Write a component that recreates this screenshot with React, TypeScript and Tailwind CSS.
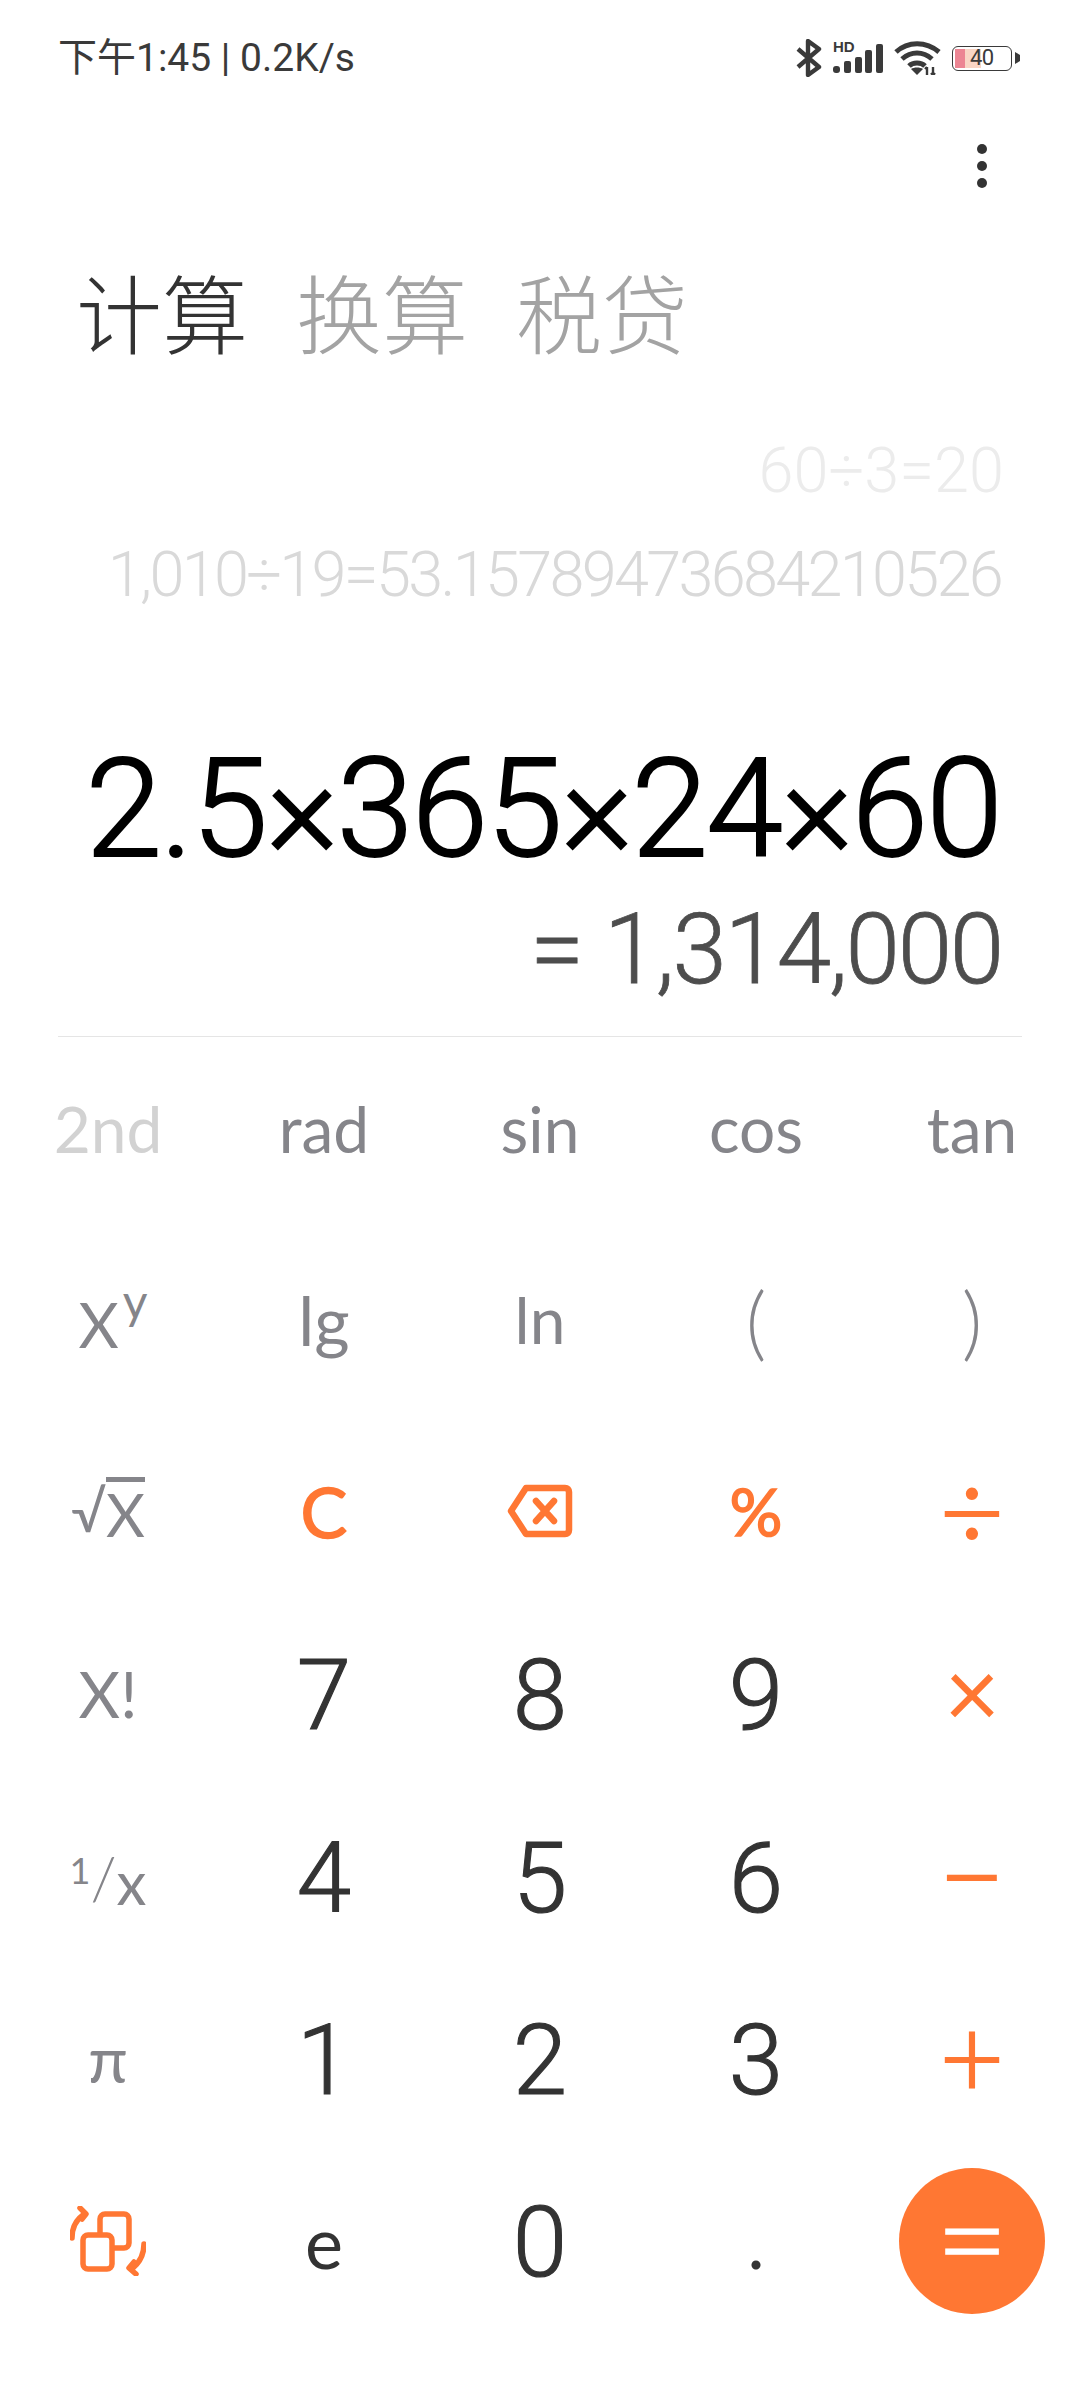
const sans = "font-['Lato','Noto_Sans_CJK_SC',sans-serif]";
const nums = "font-['Roboto','Noto_Sans_CJK_SC',sans-serif]";

const ORANGE = "#ff7733";

function BluetoothIcon() {
  return (
    <svg width="26" height="38" viewBox="0 0 26 38" fill="none" stroke="#3a3a3a" strokeWidth="4.4">
      <path d="M2 10 L23 28 L12 36 V2 L23 10 L2 28" strokeLinejoin="round" />
    </svg>
  );
}

function SignalIcon() {
  return (
    <div className="relative w-[50px] h-[32px]">
      <span className="absolute left-0 top-[-3px] text-[15px] leading-[16px] font-bold text-[#3a3a3a] font-['Liberation_Sans',sans-serif]">HD</span>
      <svg className="absolute left-0 top-0" width="50" height="32" viewBox="0 0 50 32" fill="#3a3a3a">
        <rect x="0" y="24" width="7" height="7" rx="3" />
        <rect x="11" y="19" width="7" height="12" rx="2" />
        <rect x="22" y="15" width="7" height="16" rx="2" />
        <rect x="32" y="8" width="7" height="23" rx="2" />
        <rect x="43" y="2" width="7" height="29" rx="2" />
      </svg>
    </div>
  );
}

function WifiIcon() {
  return (
    <svg width="47" height="34" viewBox="0 0 47 34" fill="none" stroke="#3a3a3a" strokeWidth="5">
      <path d="M2 11 C14 0 32 0 45 11" />
      <path d="M8 18 C17 10 29 10 38 18" />
      <path d="M15 25 C19 21 27 21 31 25" />
      <path d="M17 28 L23 34 L29 28 C26 26 20 26 17 28 Z" fill="#3a3a3a" stroke="none" />
      <path d="M33 34 V26 M31 28 L33 26 M39 34 V26 M37 32 L39 34 L41 32" strokeWidth="2.4" />
    </svg>
  );
}

function BatteryIcon() {
  return (
    <div className="flex items-center gap-[3px]">
      <div className="relative w-[60px] h-[25px] rounded-[6px] border-[1.5px] border-[#3a3a3a] flex items-center">
        <div className="absolute left-[2px] top-[2px] bottom-[2px] w-[10px] bg-[#ec8593]" />
        <div className="absolute left-[12px] top-[2px] bottom-[2px] w-[16px] bg-[#f9d5c5]" />
        <span className={`relative ml-[17px] text-[22px] leading-[22px] tracking-[-0.5px] text-[#3a3a3a] ${nums}`}>40</span>
      </div>
      <svg width="5" height="12" viewBox="0 0 5 12" fill="#3a3a3a">
        <path d="M0 0 L5 3 V9 L0 12 Z" />
      </svg>
    </div>
  );
}

function BackspaceIcon() {
  return (
    <svg width="66" height="54" viewBox="0 0 66 54" fill="none" stroke={ORANGE} strokeWidth="6.5" strokeLinejoin="round" strokeLinecap="round">
      <path d="M19 4 H58 C60.5 4 62 5.5 62 8 V46 C62 48.5 60.5 50 58 50 H19 L4 27 Z" />
      <path d="M29 17 L47 37 M47 17 L29 37" />
    </svg>
  );
}

function SwitchIcon() {
  return (
    <svg width="76" height="70" viewBox="0 0 76 70" fill="none" stroke={ORANGE} strokeWidth="5.5" strokeLinecap="round" strokeLinejoin="round">
      <rect x="30" y="8" width="29" height="34" rx="5" />
      <rect x="13" y="29" width="29" height="34" rx="5" fill="#ffffff" />
      <path d="M2 32 C2 22 6 14 13 9" />
      <path d="M10 2 L16 8 L12 13" />
      <path d="M74 38 C74 48 70 56 63 62" />
      <path d="M66 68 L59 62 L64 56" />
    </svg>
  );
}

const keyBase = "flex items-center justify-center leading-none";
const fnKey = `${keyBase} text-[64px] text-[#85858a]`;
const numKey = `${keyBase} text-[98px] pt-[4px] font-light [-webkit-text-stroke:1.2px_#333333] text-[#333333] ${nums}`;
const opKey = `${keyBase} text-[#ff7733]`;
const opLine = "font-light [-webkit-text-stroke:1.8px_#ff7733]";

export default function App() {
  return (
    <div className={`w-[1080px] h-[2400px] bg-white overflow-hidden ${sans}`}>
      {/* STATUS BAR */}
      <div className="h-[116px] pl-[58px] pr-[60px] flex items-center justify-between">
        <span className={`text-[39px] leading-none text-[#3a3a3a] whitespace-nowrap ${nums}`}>下午1:45 | 0.2K/s</span>
        <div className="flex items-center gap-[11px]">
          <BluetoothIcon />
          <SignalIcon />
          <WifiIcon />
          <BatteryIcon />
        </div>
      </div>

      {/* MENU */}
      <div className="h-[100px] pr-[93px] flex items-center justify-end">
        <div className="flex flex-col gap-[7px]">
          <span className="w-[10px] h-[10px] rounded-full bg-[#333333]" />
          <span className="w-[10px] h-[10px] rounded-full bg-[#333333]" />
          <span className="w-[10px] h-[10px] rounded-full bg-[#333333]" />
        </div>
      </div>

      {/* TABS */}
      <div className="h-[190px] pl-[76px] flex items-center gap-[48px] text-[86px] leading-none font-light font-['Noto_Sans_CJK_SC',sans-serif]">
        <span className="text-[#333333]">计算</span>
        <span className="text-[#a3a3a3]">换算</span>
        <span className="text-[#a3a3a3]">税贷</span>
      </div>

      {/* HISTORY */}
      <div className={`pt-[13px] pr-[76px] flex flex-col items-end font-light text-[63px] whitespace-nowrap ${nums}`}>
        <div className="h-[104px] flex items-center text-[#ececec]">60÷3=20</div>
        <div className="h-[104px] mr-[3px] flex items-center tracking-[-2.7px] text-[#d9d9d9]">1,010÷19=53.15789473684210526</div>
      </div>

      {/* EXPRESSION */}
      <div className={`pt-[102px] pr-[78px] flex flex-col items-end whitespace-nowrap ${nums}`}>
        <div className="h-[160px] mr-[1px] flex items-center text-[138px] tracking-[-1.8px] leading-none font-light [-webkit-text-stroke:2px_#000000] text-black">2.5×365×24×60</div>
        <div className="h-[122px] flex items-center text-[98px] tracking-[-2.2px] leading-none font-light [-webkit-text-stroke:0.8px_#4d4d4d] text-[#4d4d4d]">= 1,314,000</div>
      </div>

      <div className="mt-[25px] mx-[58px] h-px bg-[#e5e5e5]" />

      {/* KEYPAD */}
      <div className="grid grid-cols-5 grid-rows-[184px_198px_184px_182px_183px_182px_182px]">
        <div className={`${fnKey} text-[#d2d2d2]!`}>2nd</div>
        <div className={fnKey}>rad</div>
        <div className={fnKey}>sin</div>
        <div className={fnKey}>cos</div>
        <div className={fnKey}>tan</div>

        <div className={`${fnKey} pl-[10px]`}>
          <span className="text-[62px] mt-[8px]">X</span>
          <span className="text-[48px] mb-[38px] ml-[4px]">y</span>
        </div>
        <div className={`${fnKey} text-[68px]!`}>lg</div>
        <div className={fnKey}>ln</div>
        <div className={`${fnKey} text-[80px]! font-light`}>(</div>
        <div className={`${fnKey} text-[80px]! font-light`}>)</div>

        <div className={fnKey}>
          <span className="text-[56px]">√</span>
          <span className="border-t-[5px] border-[#85858a] text-[60px] leading-[64px]">X</span>
        </div>
        <div className={`${opKey} text-[70px] [-webkit-text-stroke:1.5px_#ff7733]`}>C</div>
        <div className={opKey}><BackspaceIcon /></div>
        <div className={`${opKey} text-[66px] [-webkit-text-stroke:1.5px_#ff7733]`}>%</div>
        <div className={`${opKey} ${opLine} text-[112px] pb-[6px]`}>÷</div>

        <div className={fnKey}>X!</div>
        <div className={numKey}>7</div>
        <div className={numKey}>8</div>
        <div className={numKey}>9</div>
        <div className={`${opKey} text-[96px] pb-[6px]`}>×</div>

        <div className={fnKey}>
          <span className="text-[36px] mb-[14px]">1</span>
          <span className="font-light text-[60px]">/</span>
          <span className="mt-[10px] text-[60px]">x</span>
        </div>
        <div className={numKey}>4</div>
        <div className={numKey}>5</div>
        <div className={numKey}>6</div>
        <div className={`${opKey} ${opLine} text-[116px] pb-[8px]`}>−</div>

        <div className={fnKey}>π</div>
        <div className={numKey}>1</div>
        <div className={numKey}>2</div>
        <div className={numKey}>3</div>
        <div className={`${opKey} ${opLine} text-[112px] pb-[8px]`}>+</div>

        <div className={opKey}><SwitchIcon /></div>
        <div className={`${keyBase} text-[72px] text-[#333333]`}>e</div>
        <div className={numKey}>0</div>
        <div className={`${keyBase} text-[72px] text-[#333333]`}>.</div>
        <div className={keyBase}>
          <div className="w-[146px] h-[146px] rounded-full bg-[#ff7733] flex items-center justify-center text-[126px] font-light [-webkit-text-stroke:1.4px_#ffffff] leading-none text-white pb-[8px]">=</div>
        </div>
      </div>
    </div>
  );
}
